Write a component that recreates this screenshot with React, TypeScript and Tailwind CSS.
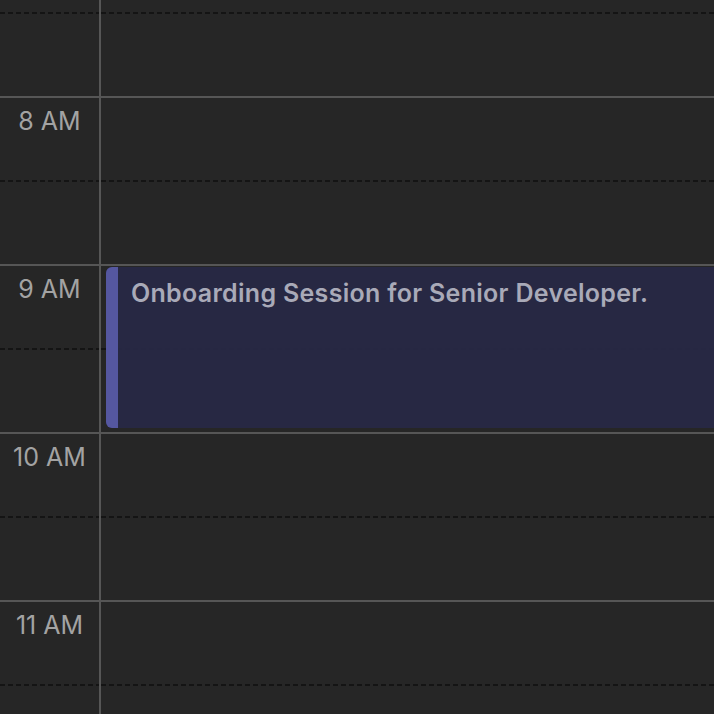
import React from "react";

const hours = ["8 AM", "9 AM", "10 AM", "11 AM"];

function Dashed() {
  return (
    <div className="flex h-[2px] w-full">
      <div className="w-[99px] bg-[repeating-linear-gradient(to_right,#141414_0_5px,transparent_5px_8px)]" />
      <div className="w-[2px] bg-[#565656]" />
      <div className="flex-1 bg-[repeating-linear-gradient(to_right,#141414_0_5px,transparent_5px_8px)]" />
    </div>
  );
}

function Half({ label }: { label?: string }) {
  return (
    <div className="flex h-[82px]">
      <div className="w-[99px] shrink-0 pt-2 text-center text-[25px] leading-[30px] text-[#a3a3a3]">
        {label}
      </div>
      <div className="w-[2px] bg-[#565656]" />
      <div className="flex-1" />
    </div>
  );
}

export default function App() {
  return (
    <div
      className="h-[714px] w-[714px] overflow-hidden bg-[#262626]"
      style={{ fontFamily: "Inter, 'Open Sans', sans-serif" }}
    >
      {/* partial 7 AM block */}
      <div className="flex h-[12px]">
        <div className="w-[99px]" />
        <div className="w-[2px] bg-[#565656]" />
      </div>
      <Dashed />
      <Half />

      {hours.map((h) => (
        <div key={h} className="relative">
          <div className="h-[2px] w-full bg-[#565656]" />
          <Half label={h} />
          <Dashed />
          <Half />
          {h === "9 AM" && (
            <div className="absolute left-[106px] right-[-10px] top-[3px] flex h-[161px] overflow-hidden rounded-[6px] bg-[#272844]/[0.97]">
              <div className="w-[12px] shrink-0 bg-[#5557a0]" />
              <div className="pl-[13px] pt-[11px] text-[25px] font-semibold leading-[30px] tracking-[0.3px] whitespace-nowrap text-[#a9aab8]">
                Onboarding Session for Senior Developer.
              </div>
            </div>
          )}
        </div>
      ))}
    </div>
  );
}
